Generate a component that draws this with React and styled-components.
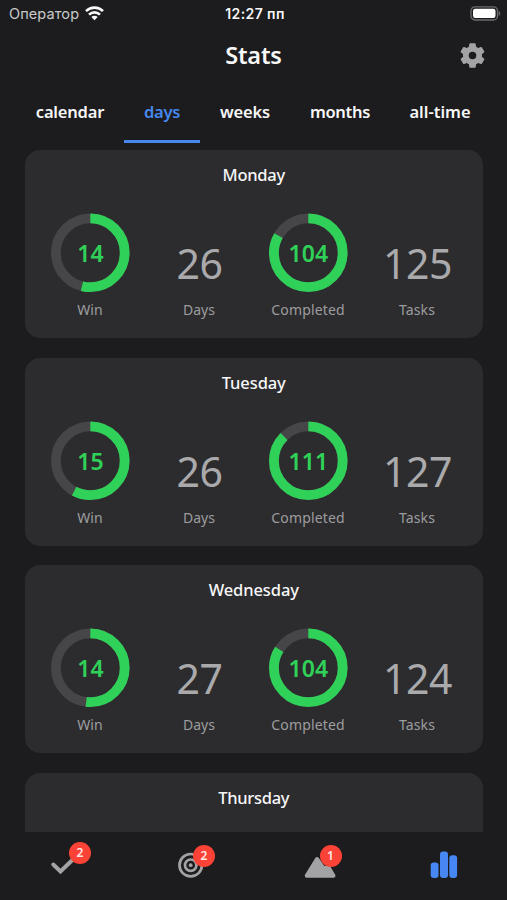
import React from 'react';
import styled, { createGlobalStyle } from 'styled-components';

const GlobalStyle = createGlobalStyle`
  * { box-sizing: border-box; }
  body { margin: 0; background: #1c1c1e; }
`;

const Screen = styled.div`
  width: 507px;
  height: 900px;
  display: flex;
  flex-direction: column;
  overflow: hidden;
  background: #1c1c1e;
  color: #f7f7f8;
  font-family: 'Noto Sans', sans-serif;
`;

const StatusBar = styled.header`
  height: 27px;
  flex: none;
  display: grid;
  grid-template-columns: 1fr auto 1fr;
  align-items: center;
  padding: 0 6px 0 9px;
  font-family: Inter, sans-serif;
  font-size: 14.5px;
`;

const Carrier = styled.div`
  display: flex;
  align-items: center;
  gap: 6px;
  color: #c9c9cb;
  letter-spacing: 0.1px;
`;

const Clock = styled.div`
  font-size: 14px;
  font-weight: 600;
  letter-spacing: 0.4px;
`;

const BatterySlot = styled.div`
  display: flex;
  justify-content: flex-end;
`;

const TitleBar = styled.div`
  height: 57px;
  flex: none;
  display: grid;
  grid-template-columns: 1fr auto 1fr;
  align-items: center;
  padding: 0 21px 1px;
`;

const Title = styled.h1`
  grid-column: 2;
  margin: 0;
  font-size: 23.5px;
  line-height: 32px;
  font-weight: 600;
  letter-spacing: -0.15px;
`;

const SettingsButton = styled.button`
  justify-self: end;
  display: flex;
  padding: 0;
  border: 0;
  background: none;
`;

const Tabs = styled.nav`
  height: 59px;
  flex: none;
  display: grid;
  grid-template-columns: 108px 76px 90px 100px 100px;
  padding-left: 16px;
`;

const Tab = styled.a`
  display: flex;
  justify-content: center;
  padding-top: 16px;
  border-bottom: 3px solid ${(p) => (p.$active ? '#4687ee' : 'transparent')};
  color: ${(p) => (p.$active ? '#4687ee' : '#f7f7f8')};
  font-size: 16.5px;
  line-height: 24px;
  font-weight: 600;
  letter-spacing: ${(p) => p.$spacing}px;
  white-space: nowrap;
`;

const CardList = styled.main`
  flex: 1;
  min-height: 0;
  overflow: hidden;
  display: flex;
  flex-direction: column;
  gap: 19.7px;
  padding: 7px 24.5px 0 25px;
`;

const Card = styled.section`
  height: 188px;
  flex: none;
  padding: 13px 10.5px 0;
  border-radius: 15px;
  background: #2c2c2e;
`;

const DayName = styled.h2`
  margin: 0 0 26px;
  text-align: center;
  font-size: 16.5px;
  line-height: 24px;
  font-weight: 500;
  letter-spacing: ${(p) => p.$spacing}px;
`;

const Metrics = styled.div`
  display: grid;
  grid-template-columns: repeat(4, 109px);
`;

const Metric = styled.div`
  display: flex;
  flex-direction: column;
  align-items: center;
`;

const Figure = styled.div`
  height: 80px;
  display: flex;
  align-items: flex-end;
`;

const BigNumber = styled.span`
  margin-bottom: 3px;
  padding-left: 1px;
  color: #aaaaac;
  font-size: 41px;
  line-height: 54px;
  letter-spacing: -0.5px;
`;

const RingBox = styled.div`
  display: grid;
  width: 80px;
  height: 80px;
  place-items: center;
  > * { grid-area: 1 / 1; }
`;

const RingValue = styled.span`
  padding-left: 1px;
  color: #30d158;
  font-size: 23px;
  line-height: 30px;
  font-weight: 600;
  letter-spacing: 0.1px;
`;

const Caption = styled.span`
  margin-top: 7px;
  color: #9d9d9f;
  font-size: 14px;
  line-height: 20px;
  letter-spacing: ${(p) => p.$spacing || 0}px;
`;

const BottomNav = styled.nav`
  height: 68px;
  flex: none;
  display: grid;
  grid-template-columns: repeat(4, 127px);
  background: #1c1c1e;
`;

const NavItem = styled.a`
  display: flex;
  position: relative;
`;

const Badge = styled.span`
  position: absolute;
  left: ${(p) => p.$x}px;
  top: ${(p) => p.$y}px;
  width: 22px;
  height: 22px;
  border-radius: 50%;
  background: #fb4236;
  color: #ffe9e5;
  text-align: center;
  font-size: 12px;
  line-height: 22px;
  font-weight: 600;
`;

const RADIUS = 34.4;
const CIRCUMFERENCE = 2 * Math.PI * RADIUS;

function Ring({ value, ratio }) {
  return (
    <RingBox>
      <svg width="80" height="80" viewBox="0 0 80 80" fill="none" strokeWidth="9.8">
        <circle cx="40.3" cy="39.8" r={RADIUS} stroke="#464648" />
        <circle
          cx="40.3"
          cy="39.8"
          r={RADIUS}
          stroke="#30d158"
          strokeDasharray={`${ratio * CIRCUMFERENCE} ${CIRCUMFERENCE}`}
          transform="rotate(-90 40.3 39.8)"
        />
      </svg>
      <RingValue>{value}</RingValue>
    </RingBox>
  );
}

function DayMetrics({ wins, days, completed, tasks }) {
  return (
    <Metrics>
      <Metric>
        <Figure><Ring value={wins} ratio={wins / days} /></Figure>
        <Caption>Win</Caption>
      </Metric>
      <Metric>
        <Figure><BigNumber>{days}</BigNumber></Figure>
        <Caption>Days</Caption>
      </Metric>
      <Metric>
        <Figure><Ring value={completed} ratio={completed / tasks} /></Figure>
        <Caption $spacing={0.15}>Completed</Caption>
      </Metric>
      <Metric>
        <Figure><BigNumber>{tasks}</BigNumber></Figure>
        <Caption $spacing={0.1}>Tasks</Caption>
      </Metric>
    </Metrics>
  );
}

const TABS = [
  { label: 'calendar', spacing: -0.2 },
  { label: 'days', spacing: -0.3, active: true },
  { label: 'weeks', spacing: -0.2 },
  { label: 'months', spacing: -0.3 },
  { label: 'all-time', spacing: 0 },
];

const DAYS = [
  { day: 'Monday', spacing: -0.25, stats: { wins: 14, days: 26, completed: 104, tasks: 125 } },
  { day: 'Tuesday', spacing: -0.1, stats: { wins: 15, days: 26, completed: 111, tasks: 127 } },
  { day: 'Wednesday', spacing: -0.1, stats: { wins: 14, days: 27, completed: 104, tasks: 124 } },
  { day: 'Thursday', spacing: -0.3 },
];

const WifiIcon = () => (
  <svg width="19" height="15" viewBox="0 0 19 15" fill="none" stroke="#f7f7f8" strokeWidth="2.6">
    <path d="M1 5.1a12.2 12.2 0 0 1 17 0" />
    <path d="M4 8.6a8 8 0 0 1 11 0" />
    <path d="M9.5 14.3 6.3 11.1a4.5 4.5 0 0 1 6.4 0Z" fill="#f7f7f8" stroke="none" />
  </svg>
);

const BatteryIcon = () => (
  <svg width="31" height="15" viewBox="0 0 31 15">
    <rect x="1" y=".8" width="26.5" height="13.2" rx="4" fill="none" stroke="#6b6b6d" strokeWidth="1.3" />
    <rect x="3" y="2.8" width="22.5" height="9.2" rx="2.2" fill="#fff" />
    <path d="M28.7 5v5c2-.7 2-4.3 0-5Z" fill="#6b6b6d" />
  </svg>
);

const GearIcon = () => (
  <svg width="27" height="27" viewBox="-14 -14 28 28" fill="#a3a3a5">
    <circle r="9.9" />
    {[0, 60, 120].map((angle) => (
      <path
        key={angle}
        transform={`rotate(${angle})`}
        d="M-2.3-12.7h4.600q.9 0 1 .9l.5 3.600 1.300 3.200v10l-1.300 3.200-.5 3.600q-.1.900-1 .9h-4.600q-.9 0-1-.9l-.5-3.600-1.300-3.200v-10l1.300-3.200.5-3.600q.1-.9 1-.9Z"
      />
    ))}
    <circle r="3.9" fill="#1c1c1e" />
  </svg>
);

export default function App() {
  return (
    <>
      <GlobalStyle />
      <Screen>
        <StatusBar>
          <Carrier>Оператор <WifiIcon /></Carrier>
          <Clock>12:27 пп</Clock>
          <BatterySlot><BatteryIcon /></BatterySlot>
        </StatusBar>
        <TitleBar>
          <Title>Stats</Title>
          <SettingsButton aria-label="Settings"><GearIcon /></SettingsButton>
        </TitleBar>
        <Tabs>
          {TABS.map((t) => (
            <Tab key={t.label} $active={t.active} $spacing={t.spacing}>{t.label}</Tab>
          ))}
        </Tabs>
        <CardList>
          {DAYS.map(({ day, spacing, stats }) => (
            <Card key={day}>
              <DayName $spacing={spacing}>{day}</DayName>
              {stats && <DayMetrics {...stats} />}
            </Card>
          ))}
        </CardList>
        <BottomNav>
          <NavItem>
            <svg width="127" height="68" fill="none" stroke="#a3a3a5" strokeWidth="4" strokeLinecap="round">
              <path d="M53.3 32.5 60.5 39.5 76 24.5" />
            </svg>
            <Badge $x={69} $y={10}>2</Badge>
          </NavItem>
          <NavItem>
            <svg width="127" height="68" fill="none" stroke="#a3a3a5" strokeWidth="2.7">
              <circle cx="63.7" cy="33.2" r="11.2" />
              <circle cx="63.7" cy="33.2" r="5.7" />
              <circle cx="63.7" cy="33.2" r="1.9" fill="#a3a3a5" stroke="none" />
            </svg>
            <Badge $x={66} $y={12.5}>2</Badge>
          </NavItem>
          <NavItem>
            <svg width="127" height="68" fill="#a3a3a5" stroke="#a3a3a5" strokeWidth="4" strokeLinejoin="round">
              <path d="M52.7 43.7 63 27 69.5 36.5 74.5 35.2 79.5 43.7Z" />
            </svg>
            <Badge $x={65.5} $y={12.5}>1</Badge>
          </NavItem>
          <NavItem>
            <svg width="127" height="68" fill="#4687f4">
              <rect x="49.7" y="30.5" width="7.8" height="15.5" rx="3" />
              <rect x="59" y="19.5" width="8" height="26.5" rx="3" />
              <rect x="68.3" y="23.2" width="7.8" height="22.8" rx="3" />
            </svg>
          </NavItem>
        </BottomNav>
      </Screen>
    </>
  );
}
